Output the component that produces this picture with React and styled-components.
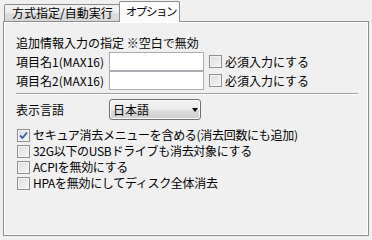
import React from "react";
import styled, { createGlobalStyle } from "styled-components";

const Global = createGlobalStyle`
  html, body {
    margin: 0;
    padding: 0;
    background: #f0f0f0;
  }
  body {
    font-family: "Noto Sans CJK JP", "Noto Sans", sans-serif;
    font-size: 12px;
    color: #000;
  }
`;

const Window = styled.div`
  width: 372px;
  height: 240px;
  box-sizing: border-box;
  padding: 0 3px 0 3px;
  background: #f0f0f0;
`;

const TabBar = styled.div`
  display: flex;
  align-items: flex-end;
  height: 21px;
  padding-left: 1px;
`;

const Tab = styled.div`
  position: relative;
  box-sizing: border-box;
  display: flex;
  align-items: center;
  height: ${(p) => (p.$active ? "21px" : "17px")};
  margin-bottom: ${(p) => (p.$active ? "-1px" : "0")};
  margin-left: ${(p) => (p.$active ? "-1px" : "0")};
  padding: ${(p) => (p.$active ? "0 3px 2px 6px" : "0 6px 0 7px")};
  font-size: ${(p) => (p.$active ? "11.5px" : "12px")};
  letter-spacing: ${(p) => (p.$active ? "-1.4px" : "0")};
  border: 1px solid #898c95;
  border-bottom: none;
  border-radius: 2px 2px 0 0;
  background: ${(p) =>
    p.$active ? "#fcfcfc" : "linear-gradient(#f2f2f2, #ebebeb 50%, #dddddd 51%, #d8d8d8)"};
  z-index: ${(p) => (p.$active ? 2 : 1)};
  line-height: 14px;
  white-space: nowrap;
`;

const Panel = styled.div`
  position: relative;
  z-index: 1;
  box-sizing: border-box;
  width: 366px;
  height: 215px;
  border: 1px solid #898c95;
  box-shadow: inset 1px 1px 0 #fff, inset -1px -1px 0 #fdfdfd;
  padding: 13px 10px 0 12px;
  display: flex;
  flex-direction: column;
`;

const Heading = styled.div`
  line-height: 16px;
  height: 16px;
  margin-bottom: 1px;
`;

const FieldRow = styled.div`
  display: grid;
  grid-template-columns: 93px 95px 13px auto;
  align-items: center;
  height: 19px;
`;

const Label = styled.span`
  line-height: 16px;
  white-space: nowrap;
`;

const TextBox = styled.div`
  box-sizing: border-box;
  height: 19px;
  border: 1px solid #abadb3;
  background: #fff;
`;

const Box = styled.span`
  box-sizing: border-box;
  display: inline-flex;
  align-items: center;
  justify-content: center;
  width: 13px;
  height: 13px;
  border: 1px solid #8e8f8f;
  background: linear-gradient(135deg, #dcdcdc, #f6f6f6);
  box-shadow: inset 0 0 0 1px #f4f4f4;
  flex: none;
`;

const Spaced = styled.div`
  margin-left: ${(p) => p.$left || 0}px;
  display: flex;
  align-items: center;
`;

const Separator = styled.div`
  margin-top: 3px;
  height: 0;
  border-top: 1px solid #a0a0a0;
  border-bottom: 1px solid #fff;
`;

const LangRow = styled.div`
  display: grid;
  grid-template-columns: 93px 92px;
  align-items: center;
  margin-top: 4px;
`;

const Select = styled.div`
  box-sizing: border-box;
  height: 21px;
  border: 1px solid #707070;
  border-radius: 3px;
  background: linear-gradient(#f2f2f2, #ebebeb 50%, #dddddd 51%, #cfcfcf);
  box-shadow: inset 0 0 0 1px #fcfcfc;
  display: flex;
  align-items: center;
  justify-content: space-between;
  padding: 0 2px 0 3px;
  line-height: 16px;
`;

const Arrow = styled.span`
  width: 0;
  height: 0;
  border-left: 3.5px solid transparent;
  border-right: 3.5px solid transparent;
  border-top: 4px solid #000;
  margin-top: 1px;
`;

const CheckList = styled.div`
  display: flex;
  flex-direction: column;
  margin-top: 7px;
  margin-left: 1px;
`;

const CheckRow = styled.div`
  display: flex;
  align-items: center;
  gap: 3px;
  height: 16px;
  line-height: 16px;
  white-space: nowrap;
  letter-spacing: -0.3px;
`;

const Check = ({ checked }) => (
  <Box>
    {checked && (
      <svg width="9" height="9" viewBox="0 0 9 9">
        <path d="M1 4.5 L3.5 7 L8 1.5" fill="none" stroke="#3b5ba5" strokeWidth="1.8" />
      </svg>
    )}
  </Box>
);

const fields = ["項目名1(MAX16)", "項目名2(MAX16)"];

const options = [
  { text: "セキュア消去メニューを含める(消去回数にも追加)", checked: true },
  { text: "32G以下のUSBドライブも消去対象にする", checked: false },
  { text: "ACPIを無効にする", checked: false },
  { text: "HPAを無効にしてディスク全体消去", checked: false },
];

export default function App() {
  return (
    <Window>
      <Global />
      <TabBar>
        <Tab>方式指定/自動実行</Tab>
        <Tab $active>オプション</Tab>
      </TabBar>
      <Panel>
        <Heading>追加情報入力の指定 ※空白で無効</Heading>
        {fields.map((f) => (
          <FieldRow key={f}>
            <Label>{f}</Label>
            <TextBox />
            <Spaced $left={5}>
              <Check />
            </Spaced>
            <Spaced $left={8}>
              <Label>必須入力にする</Label>
            </Spaced>
          </FieldRow>
        ))}
        <Separator />
        <LangRow>
          <Label>表示言語</Label>
          <Select>
            <span>日本語</span>
            <Arrow />
          </Select>
        </LangRow>
        <CheckList>
          {options.map((o) => (
            <CheckRow key={o.text}>
              <Check checked={o.checked} />
              <span>{o.text}</span>
            </CheckRow>
          ))}
        </CheckList>
      </Panel>
    </Window>
  );
}
